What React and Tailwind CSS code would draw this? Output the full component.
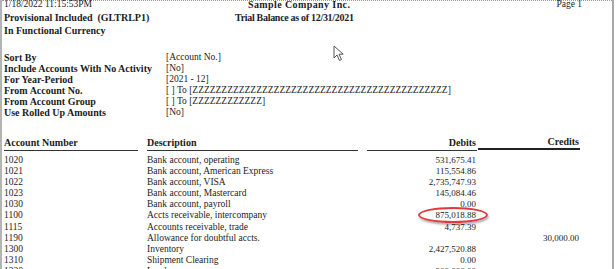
import React from "react";

const params = [
  ["Sort By", "[Account No.]"],
  ["Include Accounts With  No Activity", "[No]"],
  ["For Year-Period", "[2021 - 12]"],
  ["From Account No.", "[ ] To [" + "Z".repeat(44) + "]"],
  ["From Account Group", "[ ] To [" + "Z".repeat(12) + "]"],
  ["Use Rolled Up Amounts", "[No]"],
];

const rows = [
  ["1020", "Bank account, operating", "531,675.41", ""],
  ["1021", "Bank account, American Express", "115,554.86", ""],
  ["1022", "Bank account, VISA", "2,735,747.93", ""],
  ["1023", "Bank account, Mastercard", "145,084.46", ""],
  ["1030", "Bank account, payroll", "0.00", ""],
  ["1100", "Accts receivable, intercompany", "875,018.88", ""],
  ["1115", "Accounts receivable, trade", "4,737.39", ""],
  ["1190", "Allowance for doubtful accts.", "", "30,000.00"],
  ["1300", "Inventory", "2,427,520.88", ""],
  ["1310", "Shipment Clearing", "0.00", ""],
  ["1320", "Land", "300,000.00", ""],
];

const Cursor = () => (
  <svg width="12" height="17" viewBox="0 0 12 17" className="absolute left-[333px] top-[45px]">
    <path d="M1 1 L1 13 L4 10 L6.5 15.5 L8.5 14.6 L6 9.2 L10.2 9.2 Z" fill="#fff" stroke="#555" strokeWidth="1" strokeLinejoin="round" />
  </svg>
);

export default function App() {
  return (
    <div className="relative w-[616px] h-[269px] overflow-hidden bg-white" style={{ fontFamily: '"Liberation Serif", "Times New Roman", serif' }}>
      <div className="h-full w-[614px] border-l-2 border-r-2 border-l-[#b4b4b4] border-r-[#a8a8a8] text-[#1c1c1c] text-[9.5px]">
        <div className="border-t border-dotted border-[#9a9a9a]" />
        <div className="pl-[2px]">
          {/* report heading */}
          <div className="flex leading-[13px] -mt-[3px] pr-[30px]">
            <div className="w-[244px] shrink-0">1/18/2022 11:15:53PM</div>
            <div className="text-[10px] font-bold tracking-[0.4px]">Sample Company Inc.</div>
            <div className="flex-1 text-right">Page 1</div>
          </div>
          <div className="flex leading-[13px] text-[10px] font-bold">
            <div className="w-[231px] shrink-0">Provisional Included&nbsp; (GLTRLP1)</div>
            <div className="whitespace-nowrap tracking-[-0.3px]">Trial Balance as of 12/31/2021</div>
          </div>
          <div className="leading-[13px] text-[10px] font-bold">In Functional Currency</div>

          {/* parameters */}
          <div className="mt-[15px] flex flex-col">
            {params.map(([label, value]) => (
              <div key={label} className="flex leading-[11px]">
                <div className="w-[162px] shrink-0 text-[10px] font-bold">{label}</div>
                <div className="whitespace-nowrap">{value}</div>
              </div>
            ))}
          </div>

          {/* table */}
          <div className="mt-[18px] flex items-end text-[10px] font-bold leading-[11px]">
            <div className="w-[134px] shrink-0 border-b border-[#333] pb-[2px]">Account Number</div>
            <div className="ml-[9px] w-[211px] shrink-0 border-b border-[#333] pb-[2px]">Description</div>
            <div className="ml-[9px] w-[110px] shrink-0 border-b border-[#333] pb-[2px] pr-[1px] text-right">Debits</div>
            <div className="ml-[1px] w-[102px] shrink-0 border-b-2 border-[#222] pb-[1px] mb-[1px] pr-[1px] text-right">Credits</div>
          </div>
          <div className="mt-[4px] flex flex-col">
            {rows.map(([acct, desc, debit, credit]) => (
              <div key={acct} className="flex leading-[11.1px]">
                <div className="w-[134px] shrink-0">{acct}</div>
                <div className="ml-[9px] w-[211px] shrink-0">{desc}</div>
                <div className="ml-[9px] w-[110px] shrink-0 pr-[1px] text-right text-[9px]">{debit}</div>
                <div className="ml-[1px] w-[102px] shrink-0 pr-[1px] text-right text-[9px]">{credit}</div>
              </div>
            ))}
          </div>
        </div>
      </div>

      {/* highlight */}
      <div className="absolute left-[418px] top-[207px] h-[16px] w-[70px] rounded-[50%] border-2 border-[#e0393e] shadow-[1px_2px_2px_rgba(0,0,0,0.3)]" />
      <Cursor />
    </div>
  );
}
